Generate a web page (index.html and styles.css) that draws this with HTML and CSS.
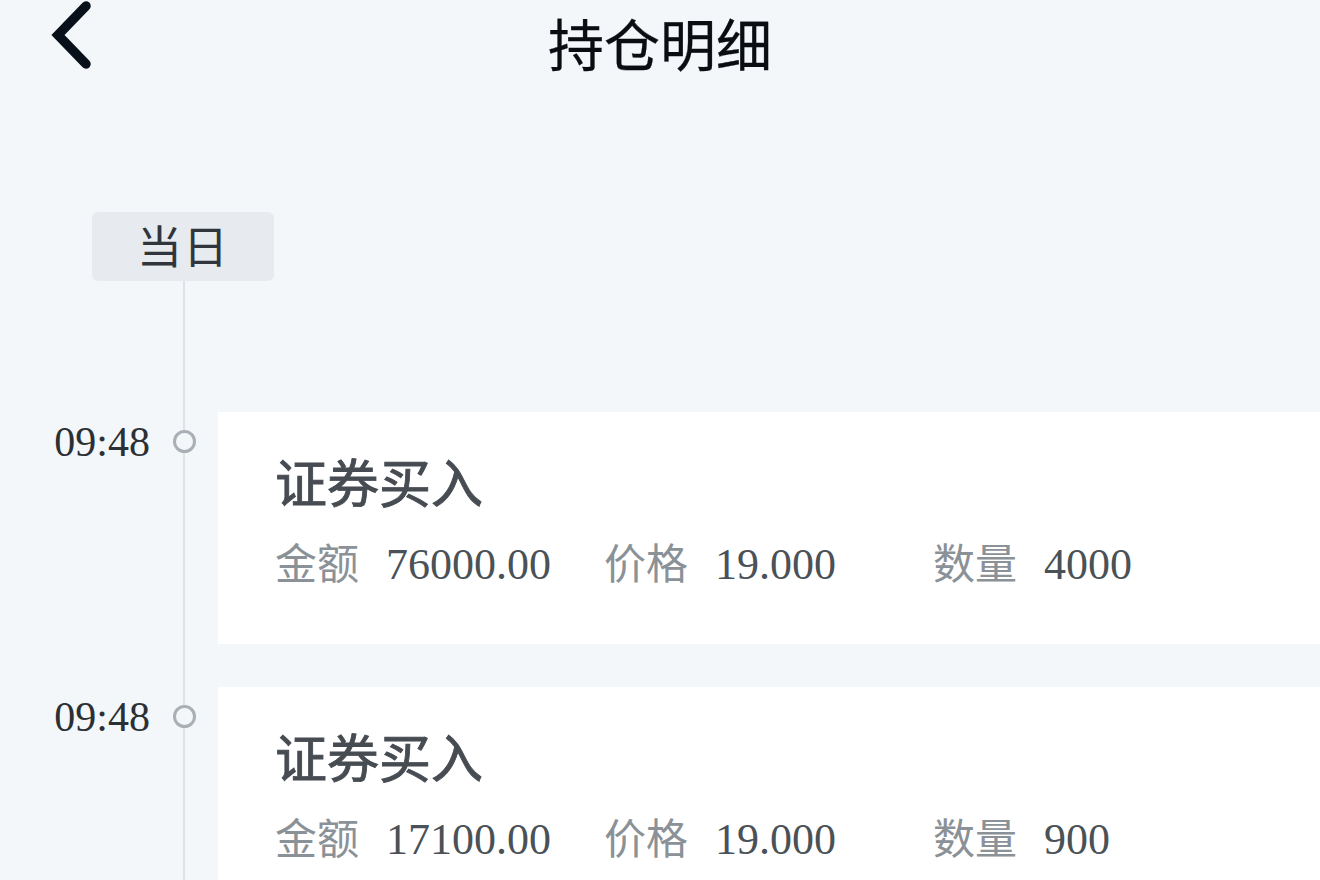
FILE: index.html
```html
<!DOCTYPE html>
<html lang="zh-CN">
<head>
<meta charset="utf-8">
<title>持仓明细</title>
<link rel="stylesheet" href="styles.css">
</head>
<body>
<div class="page">
  <header class="header">
    <div class="back">
      <svg class="back-icon" width="44" height="72" viewBox="0 0 44 72"><path d="M36 6 L8 35 L36 64" fill="none" stroke="#08111a" stroke-width="9.5" stroke-linecap="round" stroke-linejoin="miter"/></svg>
    </div>
    <h1 class="title">持仓明细</h1>
    <div class="spacer"></div>
  </header>

  <section class="timeline">
    <div class="day-row">
      <span class="day-tag">当日</span>
    </div>

    <div class="entry">
      <div class="time">09:48</div>
      <div class="dot-col"><span class="dot"></span></div>
      <div class="card">
        <div class="card-title">证券买入</div>
        <div class="fields">
          <div class="field"><span class="label">金额</span><span class="value">76000.00</span></div>
          <div class="field"><span class="label">价格</span><span class="value">19.000</span></div>
          <div class="field"><span class="label">数量</span><span class="value">4000</span></div>
        </div>
      </div>
    </div>

    <div class="entry">
      <div class="time">09:48</div>
      <div class="dot-col"><span class="dot"></span></div>
      <div class="card">
        <div class="card-title">证券买入</div>
        <div class="fields">
          <div class="field"><span class="label">金额</span><span class="value">17100.00</span></div>
          <div class="field"><span class="label">价格</span><span class="value">19.000</span></div>
          <div class="field"><span class="label">数量</span><span class="value">900</span></div>
        </div>
      </div>
    </div>
  </section>
</div>
</body>
</html>
```

FILE: styles.css
```css
* { box-sizing: border-box; }
html, body {
  margin: 0;
  padding: 0;
  background: #f4f7fa;
  overflow: hidden;
}
body {
  width: 1320px;
  height: 880px;
  font-family: "Noto Sans CJK SC", "Noto Sans", sans-serif;
}
.page {
  width: 1320px;
  height: 880px;
  overflow: hidden;
}
.header {
  display: grid;
  grid-template-columns: 1fr auto 1fr;
  align-items: start;
  height: 84px;
}
.back {
  padding-left: 50px;
  height: 72px;
}
.back-icon { display: block; }
.title {
  margin: 0;
  font-size: 56px;
  line-height: 84px;
  font-weight: 400;
  color: #0a0e12;
  letter-spacing: 0;
  -webkit-text-stroke: 0.3px #0a0e12;
}
.timeline {
  position: relative;
  padding-top: 128px;
}
.timeline::before {
  content: "";
  position: absolute;
  left: 183px;
  top: 197px;
  bottom: 0;
  width: 2px;
  background: #dfe3e7;
}
.day-row {
  padding-left: 92px;
  margin-bottom: 131px;
}
.day-tag {
  display: inline-block;
  width: 182px;
  height: 69px;
  line-height: 66px;
  text-align: center;
  background: #e7ebef;
  border-radius: 6px;
  font-size: 45px;
  color: #30363b;
  letter-spacing: 1px;
}
.entry {
  display: grid;
  grid-template-columns: 152px 66px 1fr;
  margin-bottom: 43px;
  position: relative;
}
.time {
  font-family: "Liberation Serif", "Times New Roman", serif;
  font-size: 42px;
  line-height: 60px;
  color: #2b3035;
  text-align: right;
  padding-right: 2px;
}
.dot-col {
  display: flex;
  justify-content: flex-start;
  padding-left: 21px;
  padding-top: 18px;
}
.dot {
  display: block;
  width: 23px;
  height: 23px;
  border-radius: 50%;
  border: 3px solid #a9afb5;
  background: #f4f7fa;
  position: relative;
  z-index: 1;
}
.card {
  background: #ffffff;
  height: 232px;
  padding: 33px 0 0 57px;
}
.card-title {
  font-size: 52px;
  line-height: 72px;
  font-weight: 400;
  color: #464c52;
  -webkit-text-stroke: 0.9px #464c52;
}
.fields {
  display: grid;
  grid-template-columns: 329px 329px 329px;
  margin-top: 14px;
  line-height: 60px;
}
.field {
  display: flex;
  align-items: baseline;
}
.label {
  font-size: 42px;
  color: #8a9197;
  margin-right: 27px;
}
.value {
  font-family: "Liberation Serif", "Times New Roman", serif;
  font-size: 44px;
  color: #4a5157;
}
```
